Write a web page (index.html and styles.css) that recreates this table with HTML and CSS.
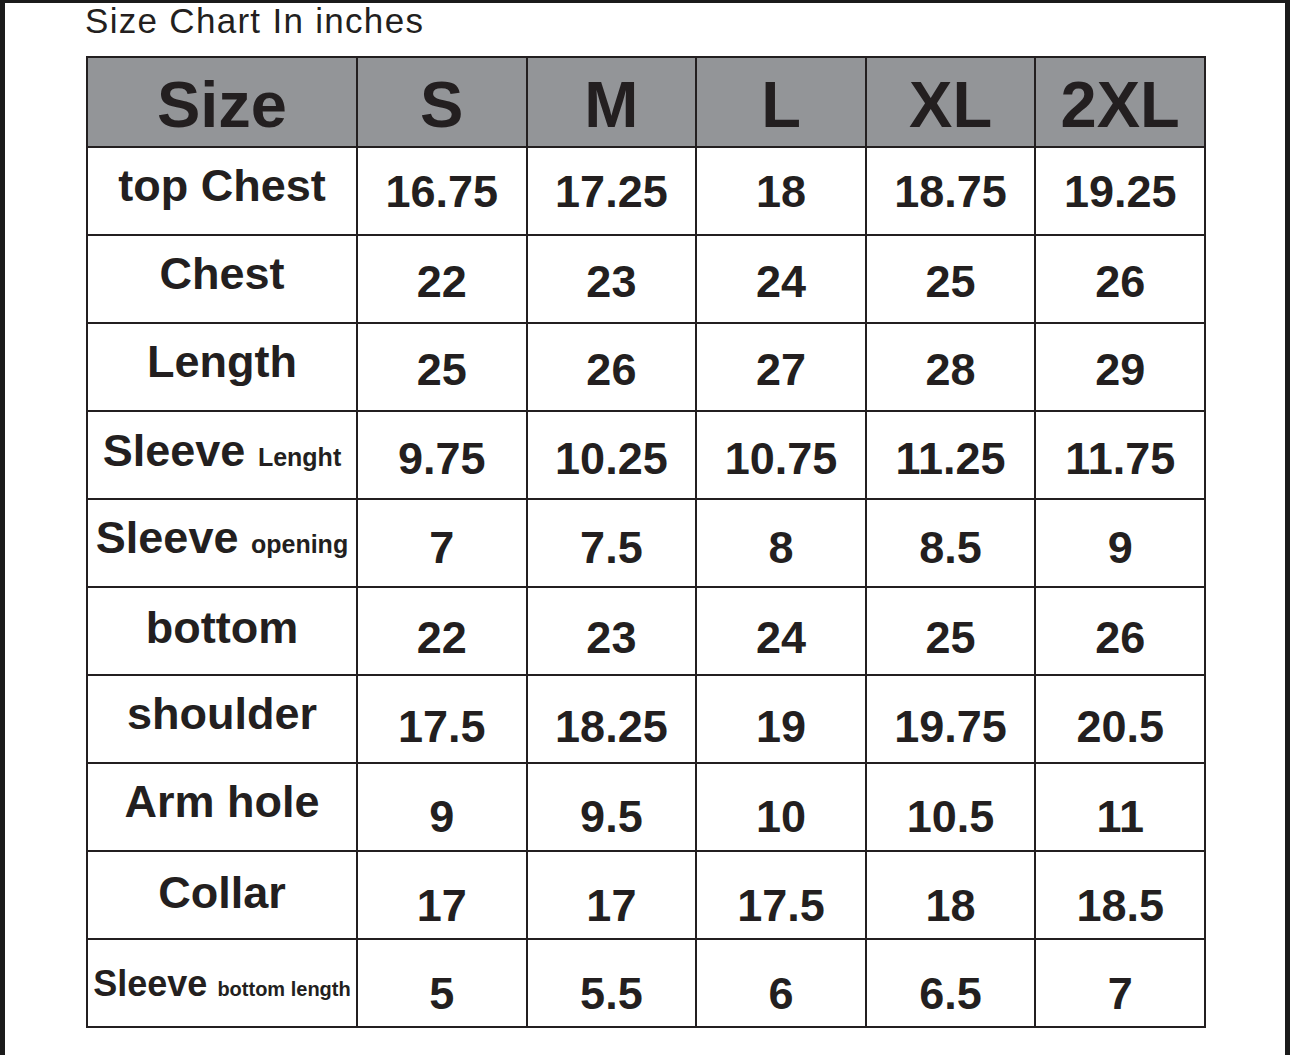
FILE: index.html
```html
<!DOCTYPE html>
<html lang="en">
<head>
<meta charset="utf-8">
<title>Size Chart In inches</title>
<link rel="stylesheet" href="styles.css">
</head>
<body>
<div class="frame">
  <h1 class="title">Size Chart In inches</h1>
  <div class="chart">
    <div class="row head">
      <div class="cell label">Size</div>
      <div class="cell">S</div>
      <div class="cell">M</div>
      <div class="cell">L</div>
      <div class="cell">XL</div>
      <div class="cell">2XL</div>
    </div>
    <div class="row">
      <div class="cell label">top Chest</div>
      <div class="cell val">16.75</div><div class="cell val">17.25</div><div class="cell val">18</div><div class="cell val">18.75</div><div class="cell val">19.25</div>
    </div>
    <div class="row">
      <div class="cell label">Chest</div>
      <div class="cell val">22</div><div class="cell val">23</div><div class="cell val">24</div><div class="cell val">25</div><div class="cell val">26</div>
    </div>
    <div class="row">
      <div class="cell label">Length</div>
      <div class="cell val">25</div><div class="cell val">26</div><div class="cell val">27</div><div class="cell val">28</div><div class="cell val">29</div>
    </div>
    <div class="row">
      <div class="cell label">Sleeve <span class="sub">Lenght</span></div>
      <div class="cell val">9.75</div><div class="cell val">10.25</div><div class="cell val">10.75</div><div class="cell val">11.25</div><div class="cell val">11.75</div>
    </div>
    <div class="row">
      <div class="cell label">Sleeve <span class="sub">opening</span></div>
      <div class="cell val">7</div><div class="cell val">7.5</div><div class="cell val">8</div><div class="cell val">8.5</div><div class="cell val">9</div>
    </div>
    <div class="row">
      <div class="cell label">bottom</div>
      <div class="cell val">22</div><div class="cell val">23</div><div class="cell val">24</div><div class="cell val">25</div><div class="cell val">26</div>
    </div>
    <div class="row">
      <div class="cell label">shoulder</div>
      <div class="cell val">17.5</div><div class="cell val">18.25</div><div class="cell val">19</div><div class="cell val">19.75</div><div class="cell val">20.5</div>
    </div>
    <div class="row">
      <div class="cell label">Arm hole</div>
      <div class="cell val">9</div><div class="cell val">9.5</div><div class="cell val">10</div><div class="cell val">10.5</div><div class="cell val">11</div>
    </div>
    <div class="row">
      <div class="cell label">Collar</div>
      <div class="cell val">17</div><div class="cell val">17</div><div class="cell val">17.5</div><div class="cell val">18</div><div class="cell val">18.5</div>
    </div>
    <div class="row">
      <div class="cell label small-label">Sleeve <span class="sub tiny">bottom length</span></div>
      <div class="cell val">5</div><div class="cell val">5.5</div><div class="cell val">6</div><div class="cell val">6.5</div><div class="cell val">7</div>
    </div>
  </div>
</div>
</body>
</html>
```

FILE: styles.css
```css
html, body {
  margin: 0;
  padding: 0;
  background: #ffffff;
}

body {
  font-family: "Liberation Sans", Arial, sans-serif;
  color: #231f20;
}

.frame {
  box-sizing: border-box;
  width: 1290px;
  height: 1055px;
  border-top: 3px solid #1b1b1b;
  border-left: 5px solid #1b1b1b;
  border-right: 5px solid #1b1b1b;
  background: #ffffff;
}

.title {
  margin: 0 0 18px 0;
  padding-left: 80px;
  font-size: 35px;
  line-height: 35px;
  font-weight: normal;
  letter-spacing: 1.3px;
  color: #231f20;
}

.chart {
  margin-left: 81px;
  width: 1120px;
  box-sizing: border-box;
  display: grid;
  grid-template-columns: 268px repeat(5, 1fr);
  grid-template-rows: 88px repeat(10, 86px);
  gap: 2px;
  padding: 2px;
  background: #231f20;
}

.row {
  display: contents;
}

.cell {
  background: #ffffff;
  text-align: center;
  white-space: nowrap;
  font-weight: bold;
  color: #231f20;
}

.head .cell {
  background: #939598;
  font-size: 65px;
  line-height: 65px;
  padding-top: 14px;
}

.label {
  font-size: 45px;
  line-height: 45px;
  padding-top: 15px;
}

.sub {
  font-size: 25px;
  line-height: 25px;
}

.small-label {
  font-size: 36px;
  line-height: 36px;
  padding-top: 26px;
}

.sub.tiny {
  font-size: 20px;
  line-height: 20px;
}

.val {
  font-size: 45px;
  line-height: 45px;
  padding-top: 21px;
}

.row:nth-child(3) .val { padding-top: 23px; }
.row:nth-child(4) .val { padding-top: 23px; }
.row:nth-child(5) .val { padding-top: 24px; }
.row:nth-child(6) .val { padding-top: 25px; }
.row:nth-child(7) .val { padding-top: 27px; }
.row:nth-child(8) .val { padding-top: 28px; }
.row:nth-child(9) .val { padding-top: 30px; }
.row:nth-child(10) .val { padding-top: 31px; }
.row:nth-child(11) .val { padding-top: 31px; }

.row:nth-child(5) .label { padding-top: 16px; }
.row:nth-child(7) .label { padding-top: 17px; }
.row:nth-child(10) .label { padding-top: 18px; }
```
